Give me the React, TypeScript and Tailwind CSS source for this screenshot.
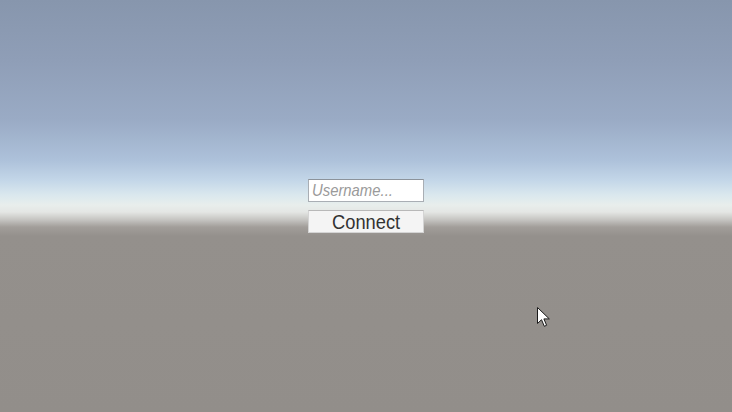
export default function App() {
  return (
    <div
      className="relative w-[732px] h-[412px] overflow-hidden flex flex-col items-center pt-[179px] gap-[8px]"
      style={{
        background:
          'linear-gradient(to bottom, #8796ad 0px, #8f9eb7 60px, #9aabc5 120px, #adc1da 160px, #c3d6e8 180px, #dae8ee 195px, #e8eeec 205px, #e4e6e4 212px, #c4c3c0 220px, #a29e9a 227px, #94908c 236px, #928e8a 412px)',
      }}
    >
      {/* Username field */}
      <div className="w-[116px] h-[23px] bg-white border border-[#a9aeb4] border-t-[#8c939b] flex items-center pl-[3px]">
        <span className="font-['Liberation_Sans',Arial,sans-serif] italic text-[16.5px] leading-none text-[#9a9a9a] inline-block origin-left scale-x-[0.9]">
          Username...
        </span>
      </div>

      {/* Connect button */}
      <div className="w-[116px] h-[23px] bg-[#f4f4f4] border border-[#d4d4d4] border-t-[#b8b8b8] flex items-center justify-center">
        <span className="font-['Liberation_Sans',Arial,sans-serif] text-[21px] leading-none text-[#323232] inline-block scale-x-[0.87]">
          Connect
        </span>
      </div>

      {/* Mouse pointer */}
      <svg className="absolute left-[537px] top-[307px]" width="14" height="21" viewBox="0 0 14 21">
        <path
          d="M0.5 0.5 L0.5 16.5 L4.5 12.7 L7.3 19.3 L9.6 18.3 L6.9 11.9 L12.3 11.9 Z"
          fill="#ffffff"
          stroke="#1a1a1a"
          strokeWidth="1"
          strokeLinejoin="miter"
        />
      </svg>
    </div>
  );
}
